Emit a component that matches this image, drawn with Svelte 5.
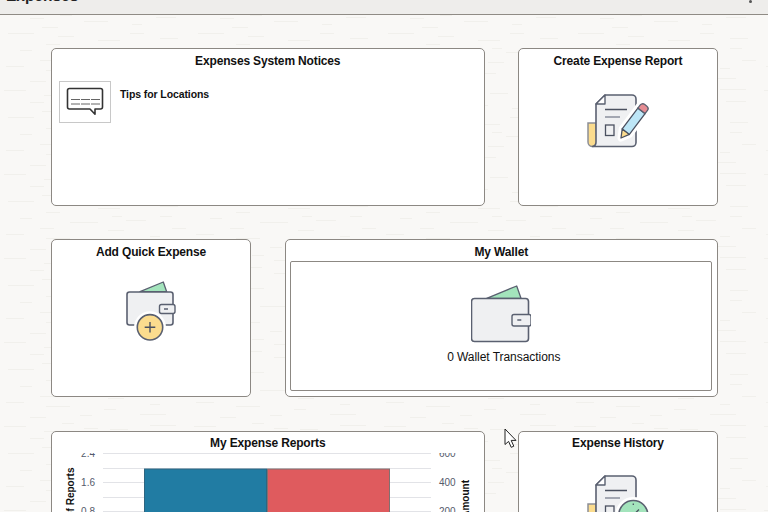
<script lang="ts">
	const gridLines = [453.5, 468.5, 482.5, 497.5, 511.5];
	const leftTicks = [
		{ y: 453, label: '2.4' },
		{ y: 482, label: '1.6' },
		{ y: 511, label: '0.8' }
	];
	const rightTicks = [
		{ y: 453, label: '600' },
		{ y: 482, label: '400' },
		{ y: 511, label: '200' }
	];
</script>

<div class="page">
	<header class="banner">
		<span class="banner-title">Expenses</span>
		<span class="kebab"></span>
	</header>

	<main class="tiles">
		<section class="tile wide">
			<h2>Expenses System Notices</h2>
			<div class="notice">
				<div class="notice-icon">
					<svg width="50" height="40" viewBox="60 82 50 40">
						<path d="M69.5 88.500H100.500a2 2 0 0 1 2 2V107a2 2 0 0 1-2 2H95V114.300L90 109H69.500a2 2 0 0 1-2-2V90.500a2 2 0 0 1 2-2Z" fill="#fff" stroke="#333" stroke-width="1.600" stroke-linejoin="round" />
						<path d="M71 99.500H100M71 104H100" stroke="#666" stroke-width="1" stroke-dasharray="9 1" fill="none" />
					</svg>
				</div>
				<span class="notice-text">Tips for Locations</span>
			</div>
		</section>

		<section class="tile">
			<h2>Create Expense Report</h2>
			<svg class="report-icon" width="70" height="70" viewBox="-2 0 70 70">
				<path d="M11 33H3V52a4.500 4.500 0 0 0 9 0Z" fill="#fbdc8e" stroke="#8d8f96" stroke-width="1.500" />
				<path d="M11 14L20 5H47a4 4 0 0 1 4 4V52.500a4 4 0 0 1-4 4H7.500a4.500 4.500 0 0 0 3.500-4.500Z" fill="#eff0f2" stroke="#5a6070" stroke-width="1.600" stroke-linejoin="round" />
				<path d="M11 14L20 5V14Z" fill="#fff" stroke="#5a6070" stroke-width="1.400" stroke-linejoin="round" />
				<path d="M20 19.500H42" stroke="#4b5160" stroke-width="1.300" />
				<path d="M20 27H35" stroke="#8a8f9c" stroke-width="1.500" />
				<rect x="20.500" y="35" width="8.500" height="10.500" fill="#eff0f2" stroke="#4b5160" stroke-width="1.300" />
				<g transform="translate(36 48) rotate(37)">
					<path d="M0 0L-4.500 -8V-38a3 3 0 0 1 3-3H1.500a3 3 0 0 1 3 3V-8Z" fill="#fff" stroke="#fff" stroke-width="7" stroke-linejoin="round" />
					<path d="M0 0L-4.500 -8H4.500Z" fill="#fbdc8e" stroke="#4b5160" stroke-width="1.300" stroke-linejoin="round" />
					<rect x="-4.500" y="-34" width="9" height="26" fill="#bde6f7" stroke="#4b5160" stroke-width="1.300" />
					<path d="M-4.500 -34V-38a3 3 0 0 1 3-3H1.500a3 3 0 0 1 3 3V-34Z" fill="#e58c93" stroke="#5a6070" stroke-width="1.300" />
				</g>
			</svg>
		</section>

		<section class="tile second-row">
			<h2>Add Quick Expense</h2>
			<svg class="quick-icon" width="60" height="70" viewBox="121 275 60 70">
				<path d="M140 291.700L163.300 282L166.700 291.700Z" fill="#a3e4bc" stroke="#5a6070" stroke-width="1.300" stroke-linejoin="round" />
				<rect x="127" y="292" width="46" height="33" rx="2.500" fill="#eff0f2" stroke="#5a6070" stroke-width="1.600" />
				<rect x="159.500" y="304.500" width="15.500" height="9" rx="2" fill="#eff0f2" stroke="#5a6070" stroke-width="1.400" />
				<path d="M164 309H168" stroke="#5a6070" stroke-width="1.300" />
				<circle cx="150" cy="327.300" r="16" fill="#fff" />
				<circle cx="150" cy="327.300" r="12.700" fill="#fbdc8e" stroke="#5a6070" stroke-width="1.600" />
				<path d="M150 322V332.600M144.700 327.300H155.300" stroke="#4b5160" stroke-width="1.400" />
			</svg>
		</section>

		<section class="tile wide second-row">
			<h2>My Wallet</h2>
			<div class="wallet-box">
				<svg class="wallet-icon" width="60" height="64" viewBox="471 280 60 64">
					<path d="M486.700 298.300L516.700 286L521 298.300Z" fill="#a3e4bc" stroke="#5a6070" stroke-width="1.300" stroke-linejoin="round" />
					<rect x="471.500" y="298.500" width="57" height="43" rx="3" fill="#eff0f2" stroke="#5a6070" stroke-width="1.600" />
					<rect x="512" y="314.500" width="19" height="11.500" rx="2" fill="#eff0f2" stroke="#5a6070" stroke-width="1.400" />
					<path d="M517.300 320H521.300" stroke="#5a6070" stroke-width="1.300" />
				</svg>
				<span class="wallet-count">0 Wallet Transactions</span>
			</div>
		</section>

		<section class="tile wide last-row">
			<h2>My Expense Reports</h2>
			<svg class="chart" width="432" height="60" viewBox="52 453 432 60">
				{#each gridLines as y}
					<line x1="103" x2="431" y1={y} y2={y} stroke="#e2e3e7" />
				{/each}
				<rect x="144.500" y="469" width="122" height="60" fill="#217ca3" stroke="#2e6580" />
				<rect x="267.500" y="469" width="122" height="60" fill="#df5b5e" stroke="#807070" />
				{#each leftTicks as t}
					<text class="tick" x="95" y={t.y + 4} text-anchor="end">{t.label}</text>
				{/each}
				{#each rightTicks as t}
					<text class="tick" x="439" y={t.y + 4}>{t.label}</text>
				{/each}
				<text class="axis" transform="translate(74 467.500) rotate(-90)" text-anchor="end"># of Reports</text>
				<text class="axis" transform="translate(469 480) rotate(-90)" text-anchor="end">Total Amount</text>
			</svg>
		</section>

		<section class="tile last-row">
			<h2>Expense History</h2>
			<svg class="history-icon" width="70" height="70" viewBox="-2 0 70 70">
				<path d="M11 33H3V52a4.500 4.500 0 0 0 9 0Z" fill="#fbdc8e" stroke="#8d8f96" stroke-width="1.500" />
				<path d="M11 14L20 5H47a4 4 0 0 1 4 4V52.500a4 4 0 0 1-4 4H7.500a4.500 4.500 0 0 0 3.500-4.500Z" fill="#eff0f2" stroke="#5a6070" stroke-width="1.600" stroke-linejoin="round" />
				<path d="M11 14L20 5V14Z" fill="#fff" stroke="#5a6070" stroke-width="1.400" stroke-linejoin="round" />
				<path d="M20 19.500H42" stroke="#4b5160" stroke-width="1.300" />
				<path d="M20 27H35" stroke="#8a8f9c" stroke-width="1.500" />
				<rect x="20.500" y="35" width="8.500" height="10.500" fill="#eff0f2" stroke="#4b5160" stroke-width="1.300" />
				<circle cx="48.300" cy="44" r="18" fill="#fff" />
				<circle cx="48.300" cy="44" r="14.500" fill="#a3e4bc" stroke="#5a6070" stroke-width="1.600" />
				<path d="M48.300 32.500V34M48.300 44L54 38.500" stroke="#4b5160" stroke-width="1.300" />
			</svg>
		</section>
	</main>

	<svg class="cursor" width="14" height="21" viewBox="-1 -1 14 21">
		<path d="M0 0V15.500L3.600 12.400L6.200 18.300L8.800 17.200L6.200 11.400H11Z" fill="#fff" stroke="#222" stroke-width="1" stroke-linejoin="round" />
	</svg>
</div>

<style>
	:global(body) {
		overflow: hidden;
		background-color: #f9f8f6;
		background-image: url("data:image/svg+xml,%3Csvg xmlns='http://www.w3.org/2000/svg' width='190' height='84'%3E%3Cg stroke='%23f1f0ec' stroke-width='1'%3E%3Cpath d='M4 6.500h22M44 11.500h10M62 3.500h12M84 8.500h14M110 9.500h18M150 5.500h26M30 18.500h14M60 15.500h12M84 21.500h24M132 24.500h10M156 17.500h20M8 33.500h26M42 27.500h16M58 36.500h16M98 40.500h22M130 33.500h14M160 38.500h18M20 50.500h12M46 44.500h14M70 54.500h28M112 48.500h10M126 52.500h20M160 48.500h12M172 60.500h14M6 66.500h18M46 70.500h24M40 60.500h14M104 73.500h12M108 62.500h16M140 78.500h26M150 68.500h10M30 81.500h16M80 79.500h12'/%3E%3C/g%3E%3C/svg%3E");
		font-family: "Liberation Sans", Arial, sans-serif;
	}

	.page {
		position: relative;
		height: 512px;
		overflow: hidden;
	}

	.banner {
		display: flex;
		justify-content: space-between;
		align-items: flex-start;
		height: 14px;
		padding: 0 16px 0 6px;
		overflow: hidden;
		background: #eeedeb;
		border-bottom: 1px solid #8f8b85;
	}

	.banner-title {
		font-size: 15.500px;
		font-weight: 700;
		line-height: 18px;
		margin-top: -13px;
		color: #222;
	}

	.kebab {
		width: 3px;
		height: 3px;
		border-radius: 50%;
		background: #555;
	}

	.tiles {
		display: grid;
		grid-template-columns: repeat(3, 200px);
		grid-template-rows: 158px 159px 158px;
		gap: 33px 33.500px;
		padding: 33px 0 0 51px;
	}

	.tile {
		display: flex;
		flex-direction: column;
		box-sizing: border-box;
		background: #fff;
		border: 1px solid #8c8883;
		border-radius: 5px;
		overflow: hidden;
	}

	.second-row {
		height: 158px;
	}

	.wide {
		grid-column: span 2;
	}

	h2 {
		margin: 0;
		padding-top: 5px;
		font-size: 12px;
		letter-spacing: -0.150px;
		line-height: 14px;
		font-weight: 700;
		text-align: center;
		color: #111;
	}

	.last-row h2 {
		padding-top: 4px;
	}

	.notice {
		display: flex;
		gap: 9px;
		margin: 13px 0 0 7px;
	}

	.notice-icon {
		display: flex;
		box-sizing: border-box;
		width: 52px;
		height: 42px;
		border: 1px solid #c8c8c8;
	}

	.notice-text {
		margin-top: 6px;
		font-size: 10.500px;
		letter-spacing: -0.100px;
		line-height: 14px;
		font-weight: 700;
		color: #111;
	}

	.report-icon {
		align-self: center;
		margin-top: 22px;
	}

	.quick-icon {
		align-self: center;
		margin-top: 16px;
	}

	.history-icon {
		align-self: center;
		margin-top: 21px;
	}

	.wallet-box {
		flex: 1;
		display: flex;
		flex-direction: column;
		align-items: center;
		margin: 2px 5px 5px 4px;
		background: #fff;
		border: 1px solid #8c8883;
		border-radius: 2px;
	}

	.wallet-icon {
		margin-top: 18px;
	}

	.wallet-count {
		margin-top: 6px;
		padding-left: 6px;
		font-size: 12px;
		letter-spacing: -0.050px;
		line-height: 14px;
		color: #111;
	}

	.chart {
		margin-top: 3px;
		flex: none;
	}

	.tick {
		font-family: "Liberation Sans", Arial, sans-serif;
		font-size: 10px;
		fill: #555b6b;
	}

	.axis {
		font-family: "Liberation Sans", Arial, sans-serif;
		font-size: 10px;
		font-weight: 700;
		fill: #111;
	}

	.cursor {
		position: absolute;
		left: 504px;
		top: 428px;
	}
</style>
